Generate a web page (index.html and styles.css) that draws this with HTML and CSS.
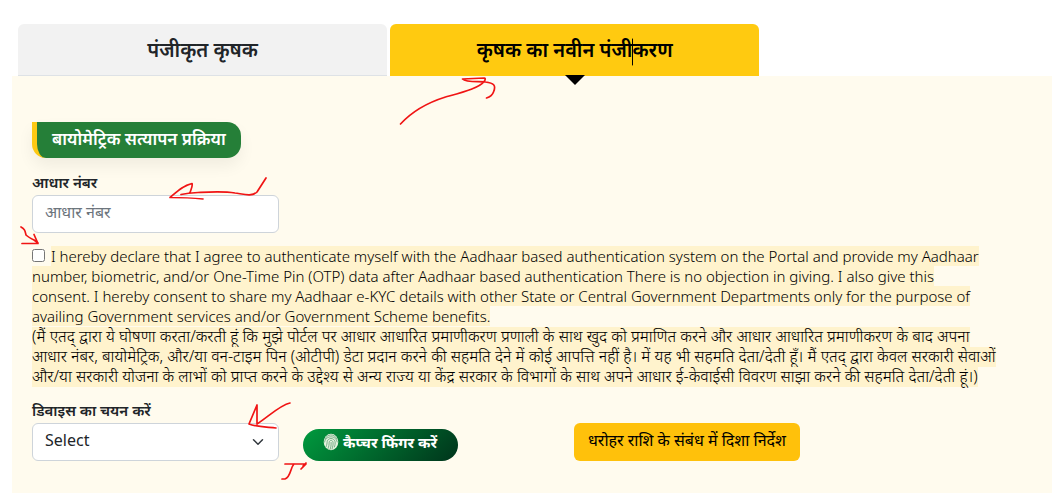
FILE: index.html
```
<!DOCTYPE html>
<html lang="hi">
<head>
  <meta charset="UTF-8" />
  <meta name="viewport" content="width=device-width, initial-scale=1.0"/>
  <title>कृषक का नवीन पंजीकरण</title>
  <link rel="stylesheet" href="styles.css">
</head>
<body>

  <nav class="tabs">
    <button type="button" class="tab">पंजीकृत कृषक</button>
    <button type="button" class="tab active">कृषक का नवीन पंजीकरण</button>
  </nav>

  <main class="panel">
    <h2 class="badge">बायोमेट्रिक सत्यापन प्रक्रिया</h2>

    <form>
      <div class="row">
        <div class="field">
          <label for="aadhaar">आधार नंबर</label>
          <input type="text" id="aadhaar" class="control" placeholder="आधार नंबर" />
        </div>
      </div>

      <div class="consent">
        <input type="checkbox" id="agree" />
        <label for="agree"><span class="mark" lang="en">I hereby declare that I agree to authenticate myself with the Aadhaar based authentication system on the Portal and provide my Aadhaar number, biometric, and/or One-Time Pin (OTP) data after Aadhaar based authentication There is no objection in giving. I also give this<br>consent. I hereby consent to share my Aadhaar e-KYC details with other State or Central Government Departments only for the purpose of availing Government services and/or Government Scheme benefits.</span><br><span class="mark hindi">(मैं एतद् द्वारा ये घोषणा करता/करती हूं कि मुझे पोर्टल पर आधार आधारित प्रमाणीकरण प्रणाली के साथ खुद को प्रमाणित करने और आधार आधारित प्रमाणीकरण के बाद अपना आधार नंबर, बायोमेट्रिक, और/या वन-टाइम पिन (ओटीपी) डेटा प्रदान करने की सहमति देने में कोई आपत्ति नहीं है। में यह भी सहमति देता/देती हूँ। मैं एतद् द्वारा केवल सरकारी सेवाओं और/या सरकारी योजना के लाभों को प्राप्त करने के उद्देश्य से अन्य राज्य या केंद्र सरकार के विभागों के साथ अपने आधार ई-केवाईसी विवरण साझा करने की सहमति देता/देती हूं।)</span></label>
      </div>

      <div class="row">
        <div class="field">
          <label for="device">डिवाइस का चयन करें</label>
          <select id="device" class="control">
            <option>Select</option>
          </select>
        </div>
        <div>
          <button type="button" class="capture">
            <svg class="finger" viewBox="0 0 16 18" aria-hidden="true">
              <ellipse cx="8" cy="9" rx="7.3" ry="8.3" fill="#e6f3df"/>
              <g fill="none" stroke="#5d9c74" stroke-width="0.8" stroke-linecap="round">
                <path d="M2 6c2-5 9-6 12 0M1.6 9c.4-6 11-8 12.6 0M3 14c1-2 1-4 1.200-5.500C5 4.500 11 4.500 12 8.500c.4 2 0 4-.6 5.500"/>
                <path d="M5 15.500c1-2 1-4 1.200-6.200.4-2.500 3.400-2.500 3.800 0 .3 2.400-.2 4.600-1 6.700M7 16.500c1-2 1.200-4.500 1.100-7"/>
              </g>
            </svg>
            <span>कैप्चर फिंगर करें</span>
          </button>
        </div>
        <div>
          <button type="button" class="guide">धरोहर राशि के संबंध में दिशा निर्देश</button>
        </div>
      </div>
    </form>
  </main>

  <svg class="notes" width="1052" height="493" viewBox="0 0 1052 493" aria-hidden="true">
    <path class="caret" d="M632.500 39v26"/>
    <path d="M400.500 124c12-13 29-22 45-27 18-5 34-9 39-16 1-2 1-3 0-3l-22 1c4 4 17 2 23 3 8 1 11 3 8 10-1 3-4 5-7 6"/>
    <path d="M266 178l-9 14c-5 5-14 2-22 1-12-2-27-1-37-.5-8 .5-12 1-17 2M203 199c-10-1-22-1.500-33-1.500 7-6 13-12 22-14 1 2-1 6-2 9"/>
    <path d="M21 227c4 2 4 4 5 8 2 2 4 3 8 5l4 3M22 243.500h16l-4-9"/>
    <path d="M290 403c-10 2-22 14-33 21M257 405v18M257 405l-8 19c7 3 18 3 27 4"/>
    <path d="M285 464h21l-5 5M294 464c-4 4-3 13-9 15h-3M306 463l-3 3"/>
  </svg>

</body>
</html>
```
FILE: styles.css
```
* { box-sizing: border-box; }

body {
  margin: 0;
  padding: 24px 0 0 12px;
  min-height: 100vh;
  display: flex;
  flex-direction: column;
  background: #fff;
  color: #212529;
  font-family: "Noto Sans", sans-serif;
  font-size: 15px;
  line-height: 20px;
}

button, input, select {
  font-family: inherit;
}

.tabs {
  display: flex;
  gap: 3px;
  padding-left: 6px;
}

.tab {
  position: relative;
  width: 35.7%;
  height: 52px;
  padding: 0;
  border: none;
  border-bottom: 1px solid #dee2e6;
  border-radius: 6px 6px 0 0;
  background: #f2f2f2;
  color: #212529;
  font-size: 20px;
  font-weight: 600;
  cursor: pointer;
}

.tab.active {
  background: #ffca10;
  border-bottom-color: #ffca10;
  color: #000;
}

.tab.active::after {
  content: "";
  position: absolute;
  top: 51px;
  left: 50%;
  margin-left: -10px;
  border: 10px solid transparent;
  border-top-color: #000;
  border-bottom: none;
}

.panel {
  flex: 1;
  padding: 46px 32px 32px 20px;
  background: #fffbee;
}

.badge {
  width: fit-content;
  margin: 0 0 14px;
  padding: 5px 15px 7px;
  border-left: 5px solid #fdc913;
  border-radius: 0 14px 14px 14px;
  background: #257f38;
  box-shadow: 0 8px 16px rgba(0, 0, 0, 0.06);
  color: #fff;
  font-size: 17px;
  font-weight: 600;
  line-height: 24px;
}

.row {
  display: grid;
  grid-template-columns: 25% 25% 1fr;
  gap: 24px;
  align-items: end;
}

.field {
  display: flex;
  flex-direction: column;
  gap: 3px;
}

.field label {
  font-size: 15px;
  font-weight: 600;
}

.control {
  width: 100%;
  height: 38px;
  padding: 0 12px 4px;
  border: 1px solid #ced4da;
  border-radius: 6px;
  background: #fff;
  color: #212529;
  font-size: 16px;
}

.control::placeholder {
  color: #6c757d;
}

select.control {
  appearance: none;
  background: #fff url("data:image/svg+xml,%3Csvg xmlns='http://www.w3.org/2000/svg' viewBox='0 0 16 16'%3E%3Cpath fill='none' stroke='%23343a40' stroke-linecap='round' stroke-linejoin='round' stroke-width='2' d='m2 5 6 6 6-6'/%3E%3C/svg%3E") no-repeat right 14px center / 12px 12px;
}

.consent {
  margin: 13px 0 14px;
  padding-right: 20px;
  color: #000;
  font-weight: 300;
}

.consent input {
  width: 13px;
  height: 13px;
  margin: 0 2px 0 0;
}

.mark {
  background: #fff3cd;
}

/* top edge stays clear so it does not cut the signs of the line above */
.mark.hindi {
  background: linear-gradient(transparent 2px, #fff3cd 2px);
  -webkit-box-decoration-break: clone;
  box-decoration-break: clone;
  font-size: 16px;
}

.capture {
  display: flex;
  align-items: center;
  gap: 4px;
  height: 32px;
  padding: 0 21px 6px 20px;
  border: none;
  border-radius: 16px;
  background: linear-gradient(135deg, #009a3e, #00341b);
  color: #fff;
  font-size: 15px;
  font-weight: 700;
  cursor: pointer;
}

.finger {
  width: 16px;
  height: 18px;
}

.guide {
  display: block;
  height: 38px;
  padding: 0 14px 4px;
  border: none;
  border-radius: 6px;
  background: #ffc10b;
  color: #000;
  font-size: 16px;
  cursor: pointer;
}

/* pen marks over the form */
.notes {
  position: absolute;
  top: 0;
  left: 0;
  pointer-events: none;
  fill: none;
  stroke: #f01414;
  stroke-width: 1.7;
  stroke-linecap: round;
  stroke-linejoin: round;
}

.notes .caret {
  stroke: #000;
  stroke-width: 1;
}
```
